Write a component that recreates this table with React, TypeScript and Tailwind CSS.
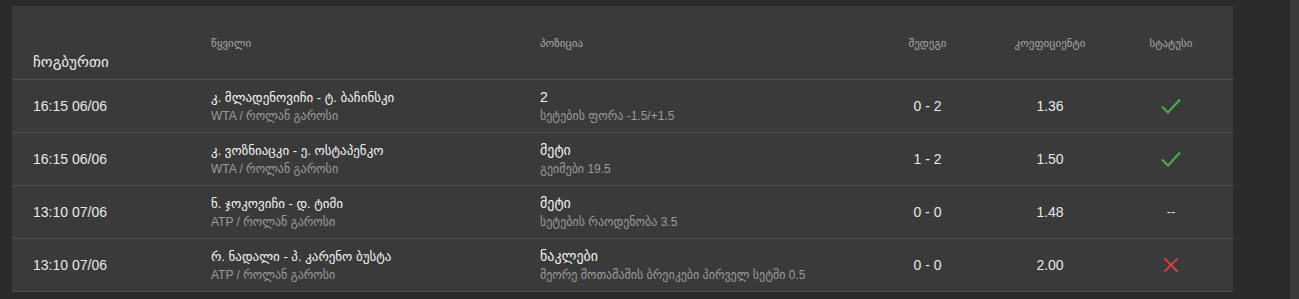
import React from "react";

type Row = {
  time: string;
  match: string;
  league: string;
  pick: string;
  market: string;
  result: string;
  odd: string;
  status: "win" | "lose" | "none";
};

const rows: Row[] = [
  { time: "16:15 06/06", match: "კ. მლადენოვიჩი - ტ. ბაჩინსკი", league: "WTA / როლან გაროსი", pick: "2", market: "სეტების ფორა -1.5/+1.5", result: "0 - 2", odd: "1.36", status: "win" },
  { time: "16:15 06/06", match: "კ. ვოზნიაცკი - ე. ოსტაპენკო", league: "WTA / როლან გაროსი", pick: "მეტი", market: "გეიმები 19.5", result: "1 - 2", odd: "1.50", status: "win" },
  { time: "13:10 07/06", match: "ნ. ჯოკოვიჩი - დ. ტიმი", league: "ATP / როლან გაროსი", pick: "მეტი", market: "სეტების რაოდენობა 3.5", result: "0 - 0", odd: "1.48", status: "none" },
  { time: "13:10 07/06", match: "რ. ნადალი - პ. კარენო ბუსტა", league: "ATP / როლან გაროსი", pick: "ნაკლები", market: "მეორე მოთამაშის ბრეიკები პირველ სეტში 0.5", result: "0 - 0", odd: "2.00", status: "lose" },
];

const font = { fontFamily: '"Liberation Sans", "DejaVu Sans", Arial, sans-serif' };
const cols = "grid grid-cols-[178px_329px_330px_115px_130px_112px] pl-[21px]";

function Status({ s }: { s: Row["status"] }) {
  if (s === "win")
    return (
      <svg width="20" height="16" viewBox="0 0 20 16" fill="none">
        <path d="M1 8.5 L7 14.5 L19 1.5" stroke="#4cae4f" strokeWidth="2" />
      </svg>
    );
  if (s === "lose")
    return (
      <svg width="16" height="16" viewBox="0 0 16 16" fill="none">
        <path d="M1.5 1.5 L14.5 14.5 M14.5 1.5 L1.5 14.5" stroke="#d93a45" strokeWidth="2" />
      </svg>
    );
  return <span className="text-[13px] text-[#e0e0e0]">--</span>;
}

export default function App() {
  return (
    <div className="flex w-[1299px] h-[299px] bg-[#2b2b2b] overflow-hidden" style={font}>
      <div className="w-[1290px] pl-[12px] pt-[6px]">
        <div className="w-[1221px] bg-[#3a3a3a]">
          <div className={`${cols} h-[74px] border-b border-[#4e4e4e]`}>
            <div className="flex items-end pb-[6px] text-[15px] text-[#eeeeee] uppercase">ჩოგბურთი</div>
            <div className="pt-[29px] text-[11px] text-[#a8a8a8]">წყვილი</div>
            <div className="pt-[29px] text-[11px] text-[#a8a8a8]">პოზიცია</div>
            <div className="pt-[29px] text-[11px] text-[#a8a8a8] text-center">შედეგი</div>
            <div className="pt-[29px] text-[11px] text-[#a8a8a8] text-center">კოეფიციენტი</div>
            <div className="pt-[29px] text-[11px] text-[#a8a8a8] text-center">სტატუსი</div>
          </div>
          {rows.map((r, i) => (
            <div key={i} className={`${cols} h-[53px] border-b border-[#4e4e4e] items-center`}>
              <div className="text-[14px] text-[#e8e8e8]">{r.time}</div>
              <div className="flex flex-col gap-[3px]">
                <div className="text-[13px] text-[#f2f2f2] leading-[17px]">{r.match}</div>
                <div className="text-[12px] text-[#9a9a9a] leading-[15px]">{r.league}</div>
              </div>
              <div className="flex flex-col gap-[3px]">
                <div className="text-[14px] text-[#f2f2f2] leading-[17px]">{r.pick}</div>
                <div className="text-[12px] text-[#9a9a9a] leading-[15px]">{r.market}</div>
              </div>
              <div className="text-[14px] text-[#e8e8e8] text-center">{r.result}</div>
              <div className="text-[14px] text-[#e8e8e8] text-center">{r.odd}</div>
              <div className="flex justify-center">
                <Status s={r.status} />
              </div>
            </div>
          ))}
        </div>
      </div>
      <div className="w-[9px] h-full bg-[#3b3b3b]" />
    </div>
  );
}
